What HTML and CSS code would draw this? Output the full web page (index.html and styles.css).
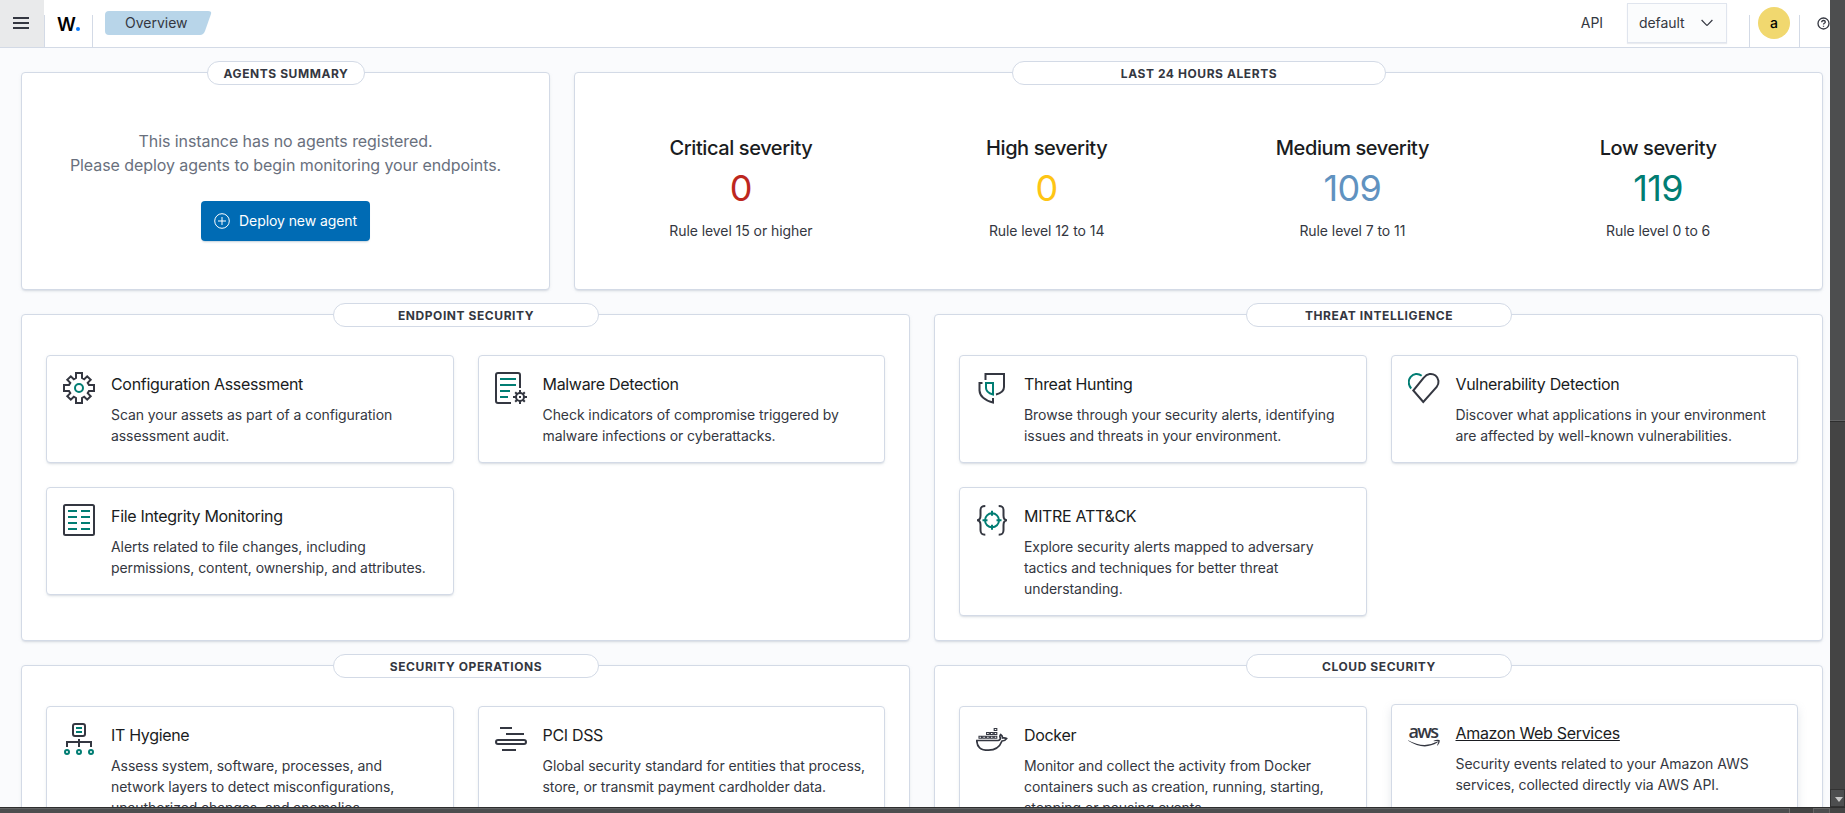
FILE: index.html
```html
<!DOCTYPE html>
<html lang="en">
<head>
  <meta charset="UTF-8">
  <meta name="viewport" content="width=device-width, initial-scale=1.0">
  <title>Overview</title>
  <link rel="stylesheet" href="styles.css">
</head>
<body>
  <div class="window">
    <div class="app">
      <header class="header">
        <button class="menu-button" aria-label="Menu">
          <svg width="16" height="12" viewBox="0 0 16 12"><path d="M0 1h16M0 6h16M0 11h16"/></svg>
        </button>
        <a class="logo">W<span class="logo-dot"></span></a>
        <div class="breadcrumb">
          <svg width="107" height="24" viewBox="0 0 107 24"><path d="M4 0h99q4 0 3 3l-6 17q-1.500 4-5 4H4q-4 0-4-4V4q0-4 4-4z"/></svg>
          <span>Overview</span>
        </div>
        <div class="header-right">
          <span class="api-label">API</span>
          <div class="select">
            <span>default</span>
            <svg width="12" height="8" viewBox="0 0 12 8"><path d="M.6 1l4.700 4.900q.7.700 1.400 0L11.400 1"/></svg>
          </div>
          <div class="user"><span class="avatar">a</span></div>
          <div class="help">
            <svg width="13" height="13" viewBox="0 0 13 13"><circle cx="6.500" cy="6.500" r="5.500"/><path d="M4.700 5.200q0-1.700 1.800-1.700t1.800 1.500q0 .8-.9 1.300t-.9 1.300M6.500 8.700v1"/></svg>
          </div>
        </div>
      </header>

      <main class="content">
        <div class="row row-top">
          <section class="panel agents">
            <h2 class="panel-title">Agents summary</h2>
            <p>This instance has no agents registered.<br>Please deploy agents to begin monitoring your endpoints.</p>
            <button class="deploy-button">
              <svg width="16" height="16" viewBox="0 0 16 16"><circle cx="8" cy="8" r="7.300"/><path d="M8 4v8M4 8h8"/></svg>
              <span>Deploy new agent</span>
            </button>
          </section>
          <section class="panel alerts">
            <h2 class="panel-title">Last 24 hours alerts</h2>
            <div class="stat critical"><h3>Critical severity</h3><strong>0</strong><span>Rule level 15 or higher</span></div>
            <div class="stat high"><h3>High severity</h3><strong>0</strong><span>Rule level 12 to 14</span></div>
            <div class="stat medium"><h3>Medium severity</h3><strong>109</strong><span>Rule level 7 to 11</span></div>
            <div class="stat low"><h3>Low severity</h3><strong>119</strong><span>Rule level 0 to 6</span></div>
          </section>
        </div>

        <div class="row">
          <section class="panel">
            <h2 class="panel-title">Endpoint security</h2>
            <div class="cards">
              <a class="card">
                <svg class="icon" viewBox="0 0 32 32">
                  <path d="M13 6V1h6v5l2.200 1.300 3-3 3.500 3.500-3 3L26 13h5v6h-5l-1.300 2.200 3 3-3.500 3.500-3-3L19 26v5h-6v-5l-2.200-1.300-3 3-3.500-3.500 3-3L6 19H1v-6h5l1.300-2.200-3-3 3.500-3.500 3 3z"/>
                  <circle class="accent" cx="16" cy="16" r="4"/>
                </svg>
                <div><h3>Configuration Assessment</h3><p>Scan your assets as part of a configuration assessment audit.</p></div>
              </a>
              <a class="card">
                <svg class="icon" viewBox="0 0 32 32">
                  <path d="M16 31H3q-2 0-2-2V3q0-2 2-2h20q2 0 2 2v13"/>
                  <path class="accent" d="M5 7h16M5 13h16M5 19h10M5 25h8"/>
                  <circle cx="25" cy="25" r="4"/>
                  <path d="M25 18v3M25 29v3M18 25h3M29 25h3M20.200 20.200l2 2M27.800 27.800l2 2M20.200 29.800l2-2M27.800 22.200l2-2"/>
                  <path d="M24 25h2"/>
                </svg>
                <div><h3>Malware Detection</h3><p>Check indicators of compromise triggered by malware infections or cyberattacks.</p></div>
              </a>
              <a class="card">
                <svg class="icon" viewBox="0 0 32 32">
                  <rect x="1" y="1" width="30" height="30" rx="1.500"/>
                  <path class="accent" d="M5 7h9M18 7h9M5 13h9M18 13h9M5 19h9M18 19h9M5 25h9M18 25h9"/>
                </svg>
                <div><h3>File Integrity Monitoring</h3><p>Alerts related to file changes, including permissions, content, ownership, and attributes.</p></div>
              </a>
            </div>
          </section>

          <section class="panel">
            <h2 class="panel-title">Threat intelligence</h2>
            <div class="cards">
              <a class="card">
                <svg class="icon" viewBox="0 0 32 32">
                  <path d="M9.500 8V2H28v13q0 5.500-8 7.500M6.500 11h-3v7.500Q4 27 17 30.500V26"/>
                  <path class="accent" d="M10 11h7v11.500q-7-2-7-6.500z"/>
                </svg>
                <div><h3>Threat Hunting</h3><p>Browse through your security alerts, identifying issues and threats in your environment.</p></div>
              </a>
              <a class="card">
                <svg class="icon" viewBox="0 0 32 32">
                  <path d="M15.300 30L5.300 18.500 16 5.500c3-4 8-4.500 11.500-2 3.500 2.700 4 8 1.200 11.300z"/>
                  <path class="accent" d="M3.200 16.500C0 13 0 8 2.700 4.800 5.500 1.700 10 1 13.700 3.800"/>
                </svg>
                <div><h3>Vulnerability Detection</h3><p>Discover what applications in your environment are affected by well-known vulnerabilities.</p></div>
              </a>
              <a class="card">
                <svg class="icon" viewBox="0 0 32 32">
                  <path d="M9.300 2C5.500 2 4.500 3 4.500 6.500v5c0 3-1 4.800-3.500 4.800 2.500 0 3.500 1.800 3.500 4.800v5c0 3.500 1 4.700 4.800 4.700M22.700 2c3.800 0 4.800 1 4.800 4.500v5c0 3 1 4.800 3.500 4.800-2.500 0-3.500 1.800-3.500 4.800v5c0 3.500-1 4.700-4.800 4.700"/>
                  <circle class="accent" cx="16" cy="16.300" r="7"/>
                  <path class="accent" d="M16 6.800v5M16 20.800v5M6.500 16.300h5M20.500 16.300h5"/>
                </svg>
                <div><h3>MITRE ATT&amp;CK</h3><p>Explore security alerts mapped to adversary tactics and techniques for better threat understanding.</p></div>
              </a>
            </div>
          </section>
        </div>

        <div class="row">
          <section class="panel">
            <h2 class="panel-title">Security operations</h2>
            <div class="cards">
              <a class="card">
                <svg class="icon" viewBox="0 0 32 32">
                  <path d="M12 1h8q2 0 2 2v8q0 2-2 2h-8q-2 0-2-2V3q0-2 2-2zM16 16v8M4 24v-5h24v5"/>
                  <path class="accent" d="M13 5h6M13 9h6"/>
                  <circle class="accent" cx="4" cy="29" r="2"/>
                  <circle class="accent" cx="16" cy="29" r="2"/>
                  <circle class="accent" cx="28" cy="29" r="2"/>
                </svg>
                <div><h3>IT Hygiene</h3><p>Assess system, software, processes, and network layers to detect misconfigurations, unauthorized changes, and anomalies.</p></div>
              </a>
              <a class="card">
                <svg class="icon" viewBox="0 0 32 32">
                  <path d="M5 5h12M11 11h18M7 27h14"/>
                  <rect x="1" y="17" width="30" height="4" rx="2"/>
                </svg>
                <div><h3>PCI DSS</h3><p>Global security standard for entities that process, store, or transmit payment cardholder data.</p></div>
              </a>
            </div>
          </section>

          <section class="panel">
            <h2 class="panel-title">Cloud security</h2>
            <div class="cards">
              <a class="card">
                <svg class="icon thin" viewBox="0 0 32 32">
                  <path d="M.8 17.500H22q2.500-.3 2.300-2.500-1-2 .3-3.500 2 1.300 2 3.500 2.200-.5 4 .6-1.500 2.400-4.600 2.400C23.500 24.500 19 27.200 12.500 27.200 4.500 27.200.8 24 .8 17.500z"/>
                  <path class="boxes" d="M3 13.300h2.600v2H3zM6.800 13.300h2.600v2H6.800zM10.600 13.300h2.600v2h-2.600zM14.400 13.300H17v2h-2.600zM18.200 13.300h2.600v2h-2.600zM10.600 9.500h2.600v2h-2.600zM14.400 9.500H17v2h-2.600zM18.200 9.500h2.600v2h-2.600zM18.200 5.500h2.600v2h-2.600z"/>
                </svg>
                <div><h3>Docker</h3><p>Monitor and collect the activity from Docker containers such as creation, running, starting, stopping or pausing events.</p></div>
              </a>
              <a class="card hovered">
                <svg class="icon aws" viewBox="0 0 32 32">
                  <text x="0.500" y="16.500" textLength="30.500">aws</text>
                  <path d="M.2 19.200Q16 28 29.300 20.600q1 .2.100 1Q16 30 .2 19.800zM25.600 19.700q3.500-1.700 6-.6.600 2.700-1.900 5.300-.7.200-.5-.5 1.400-2.600 1-3.700-1.200-.5-4.500 0z"/>
                </svg>
                <div><h3>Amazon Web Services</h3><p>Security events related to your Amazon AWS services, collected directly via AWS API.</p></div>
              </a>
            </div>
          </section>
        </div>
      </main>
    </div>

    <div class="scroll-y">
      <div class="thumb-y"></div>
      <div class="scroll-button"><span class="arrow-down"></span></div>
    </div>
    <div class="scroll-x">
      <div class="thumb-x"></div>
      <div class="scroll-button-x"></div>
    </div>
  </div>
</body>
</html>
```
FILE: styles.css
```css
* {
  box-sizing: border-box;
}
body {
  margin: 0;
  font-family: Inter, "Liberation Sans", sans-serif;
  font-size: 14px;
  line-height: 21px;
  letter-spacing: -0.07px;
  color: #343741;
  background-color: #444;
  overflow: hidden;
}
h2, h3, p {
  margin: 0;
}
button {
  font: inherit;
  letter-spacing: inherit;
  border: 0;
  padding: 0;
}
svg {
  display: block;
  fill: none;
  stroke: #343741;
}
.window {
  display: grid;
  grid-template-columns: 1fr 15px;
  grid-template-rows: 807px 6px;
  width: 1845px;
  height: 813px;
  overflow: hidden;
}
.app {
  height: 807px;
  overflow: hidden;
  background-color: #fafbfd;
}

/* header */
.header {
  display: flex;
  height: 48px;
  background-color: #fff;
  border-bottom: 1px solid #d3dae6;
}
.menu-button {
  width: 44px;
  padding: 0 0 1px 13px;
  background-color: #e9eaeb;
}
.menu-button svg {
  stroke-width: 2;
}
.logo {
  display: flex;
  align-items: baseline;
  width: 49px;
  margin-top: 15px;
  padding: 4px 0 0 12px;
  border-left: 1px solid #d3dae6;
  border-right: 1px solid #d3dae6;
  font-size: 18.5px;
  font-weight: 600;
  line-height: 10px;
  color: #000;
}
.logo-dot {
  width: 4px;
  height: 4px;
  border-radius: 50%;
  background-color: #0a7cff;
}
.breadcrumb {
  display: grid;
  width: 107px;
  height: 24px;
  margin: 11px 0 0 12px;
}
.breadcrumb svg,
.breadcrumb span {
  grid-area: 1 / 1;
}
.breadcrumb svg {
  fill: #b8d5e9;
  stroke: none;
}
.breadcrumb span {
  padding: 1px 0 0 20px;
  letter-spacing: 0;
  z-index: 1;
}
.header-right {
  display: flex;
  margin-left: auto;
}
.api-label {
  margin: 12px 24px 0 0;
}
.select {
  display: flex;
  align-items: center;
  justify-content: space-between;
  width: 100px;
  height: 40px;
  margin: 3px 22px 0 0;
  padding: 0 13px 1px 11px;
  border: 1px solid #e0e5ee;
  background-color: #fbfcfd;
  box-shadow: 0 1px 1px rgba(152, 162, 179, 0.2);
}
.select svg {
  stroke-width: 1.2;
}
.user {
  width: 51px;
  height: 32px;
  margin-top: 15px;
  padding-left: 8px;
  border-left: 1px solid #d3dae6;
  border-right: 1px solid #d3dae6;
}
.avatar {
  display: block;
  width: 32px;
  height: 32px;
  margin-top: -8px;
  border-radius: 50%;
  background-color: #f1d86f;
  font-weight: 500;
  line-height: 32px;
  text-align: center;
  color: #000;
}
.help {
  width: 30px;
  padding: 17px 0 0 16.5px;
}
.help svg {
  stroke-width: 1.3;
}

/* page */
.content {
  display: flex;
  flex-direction: column;
  gap: 24px;
  padding: 24px 7px 0 21px;
}
.row {
  display: grid;
  grid-template-columns: 1fr 1fr;
  gap: 24px;
}
.row-top {
  grid-template-columns: 529px 1fr;
}
.row-top .panel {
  height: 218px;
}
.panel {
  position: relative;
  padding: 40px 24px 24px;
  background-color: #fff;
  border: 1px solid #d3dae6;
  border-radius: 4px;
  box-shadow: 0 2px 2px -1px rgba(152, 162, 179, 0.3), 0 1px 5px -2px rgba(152, 162, 179, 0.3);
}
/* pill that sits on the top border of a panel */
.panel-title {
  position: absolute;
  top: -12px;
  left: calc(35% + 1px);
  width: calc(30% - 1px);
  height: 24px;
  border: 1px solid #d3dae6;
  border-radius: 12px;
  background-color: #fff;
  font-size: 12px;
  font-weight: 700;
  line-height: 23px;
  letter-spacing: 0.57px;
  text-align: center;
  text-transform: uppercase;
  white-space: nowrap;
}
.agents {
  display: flex;
  flex-direction: column;
  align-items: center;
  padding-top: 56px;
}
.agents p {
  font-size: 16px;
  line-height: 24px;
  text-align: center;
  color: #69707d;
}
.deploy-button {
  display: flex;
  align-items: center;
  gap: 9px;
  width: 169px;
  height: 40px;
  margin-top: 24px;
  padding: 0 0 1px 13px;
  border-radius: 4px;
  background-color: #006bb4;
  color: #fff;
  box-shadow: 0 2px 2px -1px rgba(54, 97, 126, 0.3);
}
.deploy-button svg {
  stroke: #fff;
}
.alerts {
  display: grid;
  grid-template-columns: repeat(4, 1fr);
  padding: 59px 11px 0 13px;
}
.stat {
  display: flex;
  flex-direction: column;
  align-items: center;
}
.stat h3 {
  font-size: 20px;
  font-weight: 500;
  line-height: 32px;
  letter-spacing: -0.4px;
  color: #1a1c21;
}
.stat strong {
  font-size: 36px;
  font-weight: 400;
  line-height: 48px;
  letter-spacing: -0.7px;
}
.stat span {
  margin-top: 8px;
}
.critical strong {
  color: #bd271e;
}
.high strong {
  color: #fec514;
}
.medium strong {
  color: #6092c0;
}
.low strong {
  color: #017d73;
}

/* module cards */
.cards {
  display: grid;
  grid-template-columns: 1fr 1fr;
  align-items: start;
  gap: 24px;
}
.card {
  display: flex;
  gap: 16px;
  padding: 16px;
  background-color: #fff;
  border: 1px solid #d3dae6;
  border-radius: 4px;
  box-shadow: 0 2px 2px -1px rgba(152, 162, 179, 0.3), 0 1px 5px -2px rgba(152, 162, 179, 0.3);
}
.card h3 {
  font-size: 16px;
  font-weight: 400;
  line-height: 24px;
  letter-spacing: -0.32px;
  color: #1a1c21;
}
.card p {
  margin-top: 8px;
}
.card.hovered {
  transform: translateY(-2px);
  box-shadow: 0 4px 8px rgba(152, 162, 179, 0.25);
}
.card.hovered h3 {
  text-decoration: underline;
}
.icon {
  flex: none;
  width: 32px;
  height: 32px;
  stroke-width: 2;
}
.icon .accent {
  stroke: #017d73;
}
.icon.thin {
  stroke-width: 1.7;
}
.icon .boxes {
  stroke-width: 1.1;
}
.icon.aws {
  fill: #343741;
  stroke: none;
  font-family: "Open Sans", sans-serif;
  font-size: 18px;
  font-weight: 600;
}

/* scrollbars */
.scroll-y {
  display: flex;
  flex-direction: column;
  justify-content: space-between;
  background-color: #444;
}
.thumb-y {
  height: 422px;
  background-color: #4d4e4f;
  border-bottom: 1px solid #2e2e2e;
  box-shadow: inset 0 -1px #626364;
}
.scroll-button {
  height: 18px;
  padding: 7px 0 0 4px;
  background-color: #4d4e4f;
  border: 1px solid #333;
}
.arrow-down {
  display: block;
  width: 0;
  border: 4px solid transparent;
  border-top: 5px solid #c8c8c8;
  border-bottom: 0;
}
.scroll-x {
  display: flex;
  justify-content: space-between;
  grid-column: 1 / 3;
  padding-right: 15px;
  background-color: #444;
  border-top: 1px solid #2e2e2e;
}
.thumb-x {
  width: 1790px;
  background-color: #4d4e4f;
  border-top: 1px solid #626364;
  border-right: 1px solid #707070;
}
.scroll-button-x {
  width: 17px;
  background-color: #4d4e4f;
  border: 1px solid #666;
  border-bottom: 0;
}
```
